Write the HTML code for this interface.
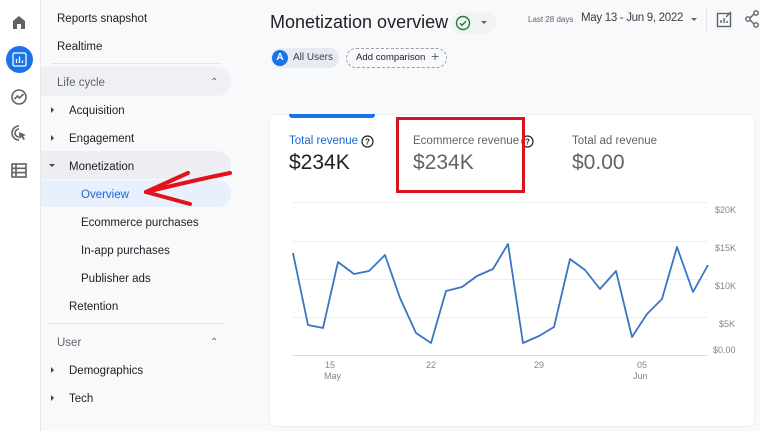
<!DOCTYPE html>
<html><head><meta charset="utf-8"><style>
*{box-sizing:border-box;margin:0;padding:0}
body{width:760px;height:431px;overflow:hidden;background:#f8f9fb;font-family:"Liberation Sans",Arial,sans-serif;color:#202124;position:relative}
.abs{position:absolute}
.rail{left:0;top:0;width:40px;height:431px;background:#fff}
.side{left:40px;top:0;width:200px;height:431px;border-left:1px solid #e6e8eb}
.t{position:absolute;font-size:11.5px;color:#202124;white-space:nowrap}
.s .t{margin-top:1.5px}
.g{color:#5f6368}
.tri{position:absolute;width:0;height:0;border-top:3px solid transparent;border-bottom:3px solid transparent;border-left:3px solid #444}
.trid{position:absolute;width:0;height:0;border-left:3px solid transparent;border-right:3px solid transparent;border-top:3px solid #444}
.card{left:270px;top:115px;width:484px;height:311px;background:#fff;border-radius:6px;box-shadow:0 0 2px #dde0e4}
</style></head><body>
<div class="abs rail"></div>
<svg class="abs" style="left:10px;top:13px" width="18" height="18" viewBox="0 0 18 18"><path d="M3 16V8L9 3l6 5v8h-4v-5H7v5z" fill="#5f6368"/></svg>
<div class="abs" style="left:6px;top:46px;width:27px;height:27px;border-radius:50%;background:#1a73e8"></div>
<svg class="abs" style="left:12px;top:52px" width="15" height="15" viewBox="0 0 15 15"><rect x="1" y="1" width="13" height="13" rx="1.5" fill="none" stroke="#fff" stroke-width="1.3"/><path d="M4.5 11V7M7.5 11V4.5M10.5 11V8.5" stroke="#fff" stroke-width="1.3"/></svg>
<svg class="abs" style="left:10px;top:88px" width="18" height="18" viewBox="0 0 18 18"><circle cx="9" cy="9" r="7" fill="none" stroke="#5f6368" stroke-width="1.6"/><path d="M4.5 11l3-3 2 2 4-4" fill="none" stroke="#5f6368" stroke-width="1.6"/></svg>
<svg class="abs" style="left:10px;top:124px" width="18" height="18" viewBox="0 0 18 18"><path d="M9 2a7 7 0 1 0 0 14M9 5a4 4 0 1 0 0 8" fill="none" stroke="#5f6368" stroke-width="1.6"/><path d="M9 8l7 3-3 1 2 3-1.5 1-2-3-2 2z" fill="#5f6368"/></svg>
<svg class="abs" style="left:11px;top:163px" width="16" height="15" viewBox="0 0 16 15"><rect x="1" y="1" width="14" height="13" fill="none" stroke="#5f6368" stroke-width="1.6"/><path d="M1 5.3h14M1 9.6h14M5 1v13" stroke="#5f6368" stroke-width="1.6"/></svg>

<div class="abs side"></div>
<div class="s">
<div class="t" style="left:57px;top:11px">Reports snapshot</div>
<div class="t" style="left:57px;top:39px">Realtime</div>
<div class="abs" style="left:52px;top:63px;width:170px;height:1px;background:#e3e5e8"></div>
<div class="abs" style="left:41px;top:67px;width:190px;height:29px;background:#eef0f3;border-radius:0 15px 15px 0"></div>
<div class="t g" style="left:57px;top:75px">Life cycle</div>
<div class="t g" style="left:210px;top:75px;font-size:10px">&#8963;</div>
<div class="tri" style="left:51px;top:107px"></div><div class="t" style="left:69px;top:103px">Acquisition</div>
<div class="tri" style="left:51px;top:135px"></div><div class="t" style="left:69px;top:131px">Engagement</div>
<div class="abs" style="left:41px;top:151px;width:190px;height:28px;background:#eceef1;border-radius:0 14px 14px 0"></div>
<div class="trid" style="left:49px;top:164px"></div><div class="t" style="left:69px;top:159px">Monetization</div>
<div class="abs" style="left:41px;top:180px;width:190px;height:27px;background:#e8f0fe;border-radius:0 14px 14px 0"></div>
<div class="t" style="left:81px;top:187px;color:#1967d2">Overview</div>
<div class="t" style="left:81px;top:215px">Ecommerce purchases</div>
<div class="t" style="left:81px;top:243px">In-app purchases</div>
<div class="t" style="left:81px;top:271px">Publisher ads</div>
<div class="t" style="left:69px;top:299px">Retention</div>
<div class="abs" style="left:48px;top:323px;width:176px;height:1px;background:#e3e5e8"></div>
<div class="t g" style="left:57px;top:335px">User</div>
<div class="t g" style="left:210px;top:335px;font-size:10px">&#8963;</div>
<div class="tri" style="left:51px;top:367px"></div><div class="t" style="left:69px;top:363px">Demographics</div>
<div class="tri" style="left:51px;top:395px"></div><div class="t" style="left:69px;top:391px">Tech</div>
</div>
<svg class="abs" style="left:140px;top:165px" width="95" height="45" viewBox="0 0 95 45"><path d="M6 27 C35 20 60 14 90 8" fill="none" stroke="#e3121a" stroke-width="4" stroke-linecap="round"/><path d="M6 27 L48 8 M6 27 L50 39" fill="none" stroke="#e3121a" stroke-width="4" stroke-linecap="round"/></svg>

<div class="t" style="left:270px;top:12px;font-size:18px">Monetization overview</div>
<div class="abs" style="left:451px;top:12px;width:45px;height:22px;border-radius:11px;background:#f1f3f4"></div>
<svg class="abs" style="left:455px;top:15px" width="16" height="16" viewBox="0 0 16 16"><circle cx="8" cy="8" r="6.5" fill="none" stroke="#188038" stroke-width="1.4"/><path d="M5 8.2l2 2 4-4" fill="none" stroke="#188038" stroke-width="1.4"/></svg>
<div class="trid" style="left:481px;top:21px;border-top-color:#5f6368"></div>
<div class="t g" style="left:528px;top:15px;font-size:8px">Last 28 days</div>
<div class="t" style="left:581px;top:12px;font-size:11.5px;letter-spacing:-0.3px;color:#3c4043">May 13 - Jun 9, 2022</div>
<div class="trid" style="left:691px;top:18px;border-top-color:#5f6368"></div>
<div class="abs" style="left:706px;top:6px;width:1px;height:28px;background:#e3e5e8"></div>
<svg class="abs" style="left:716px;top:11px" width="17" height="17" viewBox="0 0 17 17"><rect x="1.5" y="2.5" width="13" height="13" fill="none" stroke="#5f6368" stroke-width="1.4"/><path d="M5 12V9M8 12V7M11 12v-2M10 6l5-5" stroke="#5f6368" stroke-width="1.4"/></svg>
<svg class="abs" style="left:744px;top:9px" width="16" height="20" viewBox="0 0 16 20"><circle cx="12" cy="4" r="2.2" fill="none" stroke="#5f6368" stroke-width="1.4"/><circle cx="4" cy="10" r="2.2" fill="none" stroke="#5f6368" stroke-width="1.4"/><circle cx="12" cy="16" r="2.2" fill="none" stroke="#5f6368" stroke-width="1.4"/><path d="M6 9l4-4M6 11l4 4" stroke="#5f6368" stroke-width="1.4"/></svg>
<div class="abs" style="left:271px;top:48px;width:68px;height:20px;border-radius:10px;background:#e8eaf2"></div>
<div class="abs" style="left:272px;top:50px;width:16px;height:16px;border-radius:50%;background:#1a73e8;color:#fff;font-size:10px;font-weight:bold;text-align:center;line-height:16px">A</div>
<div class="t" style="left:293px;top:52px;font-size:10px;color:#3c4043">All Users</div>
<div class="abs" style="left:346px;top:48px;width:101px;height:20px;border-radius:10px;border:1px dashed #9aa0a6"></div>
<div class="t" style="left:356px;top:52px;font-size:9.6px">Add comparison</div>
<div class="t g" style="left:431px;top:48px;font-size:14px">+</div>

<div class="abs card"></div>
<div class="abs" style="left:289px;top:114px;width:86px;height:4px;background:#1a73e8;border-radius:0 0 3px 3px"></div>
<div class="t" style="left:289px;top:135px;color:#1967d2">Total revenue</div>
<svg class="abs" style="left:361px;top:135px" width="13" height="13" viewBox="0 0 13 13"><circle cx="6.5" cy="6.5" r="5.5" fill="none" stroke="#202124" stroke-width="1.2"/><text x="6.5" y="9.5" font-size="8" text-anchor="middle" font-family="Liberation Sans" font-weight="bold" fill="#202124">?</text></svg>
<div class="t" style="left:289px;top:151px;font-size:21px">$234K</div>
<div class="t g" style="left:413px;top:135px">Ecommerce revenue</div>
<svg class="abs" style="left:521px;top:135px" width="13" height="13" viewBox="0 0 13 13"><circle cx="6.5" cy="6.5" r="5.5" fill="none" stroke="#202124" stroke-width="1.2"/><text x="6.5" y="9.5" font-size="8" text-anchor="middle" font-family="Liberation Sans" font-weight="bold" fill="#202124">?</text></svg>
<div class="t g" style="left:413px;top:151px;font-size:21px">$234K</div>
<div class="t g" style="left:572px;top:135px">Total ad revenue</div>
<div class="t g" style="left:572px;top:151px;font-size:21px">$0.00</div>
<div class="abs" style="left:396px;top:117px;width:129px;height:76px;border:3px solid #d8141c"></div>

<svg class="abs" style="left:0;top:0" width="760" height="431">
<g stroke="#eceef0" stroke-width="1"><line x1="292" y1="202.5" x2="708" y2="202.5"/><line x1="292" y1="241.5" x2="708" y2="241.5"/><line x1="292" y1="279.5" x2="708" y2="279.5"/><line x1="292" y1="317.5" x2="708" y2="317.5"/><line x1="292" y1="355.5" x2="708" y2="355.5" stroke="#dadce0"/></g>
<polyline fill="none" stroke="#3a74c4" stroke-width="1.8" stroke-linejoin="round" points="293,253 308,325 323,328 338,262 354,274 369,271 385,255 400,298 416,333 431,343 446,291 462,287 477,276 493,269 508,244 523,343 539,336 554,327 570,259 585,270 600,289 616,271 632,337 647,314 662,299 677,247 693,292 708,265"/>
<g font-family="Liberation Sans" font-size="9" fill="#80868b"><text x="715" y="213">$20K</text><text x="715" y="251">$15K</text><text x="715" y="289">$10K</text><text x="719" y="327">$5K</text><text x="713" y="353">$0.00</text>
<text x="325" y="368">15</text><text x="324" y="379">May</text><text x="426" y="368">22</text><text x="534" y="368">29</text><text x="637" y="368">05</text><text x="633" y="379">Jun</text></g>
</svg>
</body></html>
